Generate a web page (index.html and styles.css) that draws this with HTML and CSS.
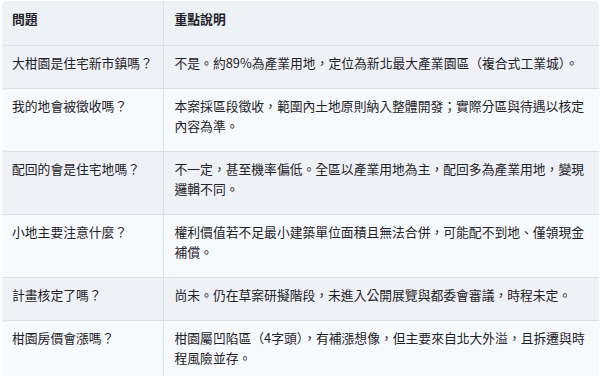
FILE: index.html
```html
<!DOCTYPE html>
<html lang="zh-Hant">
<head>
<meta charset="utf-8">
<link rel="stylesheet" href="styles.css">
</head>
<body>
<div class="wrap">
<table class="faq">
<thead>
<tr><th class="q">問題</th><th>重點說明</th></tr>
</thead>
<tbody>
<tr><td class="q">大柑園是住宅新市鎮嗎？</td><td>不是。約89%為產業用地，定位為新北最大產業園區（複合式工業城）。</td></tr>
<tr><td class="q">我的地會被徵收嗎？</td><td>本案採區段徵收，範圍內土地原則納入整體開發；實際分區與待遇以核定內容為準。</td></tr>
<tr><td class="q">配回的會是住宅地嗎？</td><td>不一定，甚至機率偏低。全區以產業用地為主，配回多為產業用地，變現邏輯不同。</td></tr>
<tr><td class="q">小地主要注意什麼？</td><td>權利價值若不足最小建築單位面積且無法合併，可能配不到地、僅領現金補償。</td></tr>
<tr><td class="q">計畫核定了嗎？</td><td>尚未。仍在草案研擬階段，未進入公開展覽與都委會審議，時程未定。</td></tr>
<tr><td class="q">柑園房價會漲嗎？</td><td>柑園屬凹陷區（4字頭），有補漲想像，但主要來自北大外溢，且拆遷與時程風險並存。</td></tr>
</tbody>
</table>
</div>
</body>
</html>
```
FILE: styles.css
```css
html, body {
  margin: 0;
  padding: 0;
  background: #ffffff;
}
body {
  font-family: "Noto Sans CJK TC", "Noto Sans", sans-serif;
  font-size: 12.8px;
  line-height: 20px;
  color: #1f2329;
}
.wrap {
  margin: 1px 1px 0 2px;
  border-radius: 5px 5px 0 0;
  overflow: hidden;
}
.faq {
  width: 100%;
  border-collapse: collapse;
  table-layout: fixed;
}
.faq th, .faq td {
  text-align: left;
  vertical-align: top;
  padding: 7px 11px 15px 11px;
  border-bottom: 1px solid #dde1e6;
}
.faq th {
  font-weight: 700;
  background: #eef1f5;
  padding-top: 8px;
  padding-bottom: 16px;
}
.faq .q {
  width: 161px;
  box-sizing: border-box;
  padding-left: 10px;
  padding-right: 4px;
  border-right: 1px solid #dde1e6;
}
.faq tbody tr:nth-child(odd) td {
  background: #eef1f5;
}
.faq tbody tr:nth-child(even) td {
  background: #f7fafd;
}
```
